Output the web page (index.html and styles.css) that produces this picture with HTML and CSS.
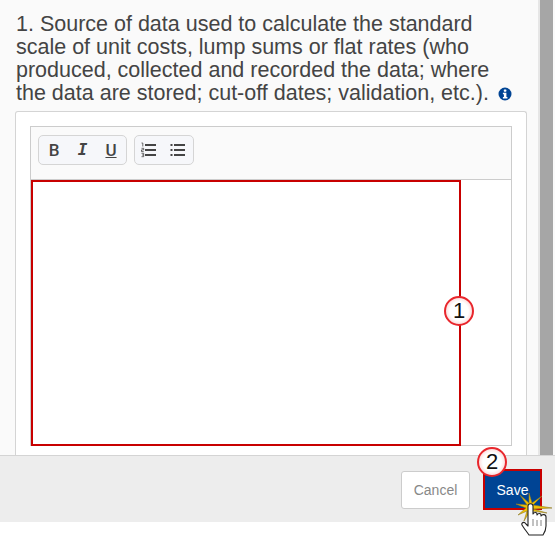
FILE: index.html
```html
<!DOCTYPE html>
<html lang="en">
<head>
    <meta charset="UTF-8">
    <title>Edit section</title>
    <link rel="stylesheet" href="styles.css">
</head>
<body>

<div class="main">
    <div class="content">
        <p class="question">1. Source of data used to calculate the standard scale of unit costs, lump sums or flat rates (who produced, collected and recorded the data; where the data are stored; cut-off dates; validation, etc.).
            <svg class="info" width="14" height="14" viewBox="0 0 14 14">
                <circle cx="7" cy="7" r="6.5" fill="#004494"/>
                <rect x="5.8" y="2.4" width="2.6" height="2.3" rx="0.6" fill="#fff"/>
                <path d="M4.9 5.8h3.5v4.3h1v1.5H4.9v-1.5h1V7.3h-1z" fill="#fff"/>
            </svg>
        </p>
        <div class="panel">
            <div class="editor">
                <div class="toolbar">
                    <div class="btn-group">
                        <span class="tool tool-b">B</span>
                        <span class="tool tool-i">I</span>
                        <span class="tool tool-u">U</span>
                    </div>
                    <div class="btn-group btn-group-lists">
                        <svg width="16" height="16" viewBox="0 0 16 16">
                            <path d="M4 3h11M4 8h11M4 13h11" stroke="#444" stroke-width="2"/>
                            <path d="M0.500 1h1.300v3.500M0.500 6.300h2.200v1.600h-2.200v1.700h2.200M0.500 11.300h2.200v3.400h-2.200M1 13h1.700" stroke="#444" stroke-width="0.800" fill="none"/>
                        </svg>
                        <svg width="16" height="16" viewBox="0 0 16 16">
                            <path d="M4 3h11M4 8h11M4 13h11" stroke="#444" stroke-width="2"/>
                            <path d="M0.500 3h2M0.500 8h2M0.500 13h2" stroke="#444" stroke-width="2"/>
                        </svg>
                    </div>
                </div>
                <div class="edit-row">
                    <div class="edit-area"></div>
                </div>
            </div>
        </div>
    </div>
    <div class="scrollbar"></div>
</div>

<div class="footer">
    <button class="btn btn-cancel">Cancel</button>
    <button class="btn btn-save">Save</button>
</div>

<!-- annotations over the screenshot -->
<span class="marker marker-1">1</span>
<span class="marker marker-2">2</span>
<svg class="cursor" width="40" height="45" viewBox="0 0 40 45">
    <path d="M27 3L18 12L37 15L18 16L32 20L17 18L20 27L15 18L9 28L12 18L3 22L11 15L1 11L12 12L5 2L14 10L14 0L17 10Z" fill="#f2c200" stroke="#8f7a2a" stroke-width="0.600"/>
    <path d="M14 42c-2-3-6-8-7-10-1-2 2-4 4-1l2 2V13c0-3 5-3 5 0v8c1-2 4-2 4 0v1c1-2 4-2 4 0v1c1-2 5-2 5 1v9c0 4-1 6-3 9z" fill="#fff" stroke="#222" stroke-width="1.100" stroke-linejoin="round"/>
    <path d="M18 26v7M22 27v6M26 27v6" stroke="#666" stroke-width="0.800"/>
</svg>

</body>
</html>
```

FILE: styles.css
```css
/* Global Styles */
html, body {
    height: 100%;
}

body {
    font-family: 'Liberation Sans', Arial, sans-serif;
    background: #fff;
    color: #404040;
    margin: 0;
    position: relative;
    overflow: hidden;
}

.main {
    display: flex;
    height: 456px;
    background: #fafafa;
    border-bottom: 1px solid #d4d4d4;
    box-sizing: border-box;
}

.content {
    flex: 1;
    padding: 13px 0 0 15px;
    min-width: 0;
    border-right: 2px solid #e6e6e6;
    display: flex;
    flex-direction: column;
}

.scrollbar {
    width: 13px;
    background: #a6a6a6;
    margin-right: 2px;
}

.question {
    width: 490px;
    margin: 0 0 6px 1px;
    font-size: 21.5px;
    line-height: 23px;
    color: #444;
}

.info {
    vertical-align: -1px;
    margin-left: 3px;
    margin-right: -30px;
}

/* Panel and editor */
.panel {
    flex: 1;
    width: 512px;
    box-sizing: border-box;
    background: #fff;
    border: 1px solid #d4d4d4;
    border-bottom: 0;
    border-radius: 3px 3px 0 0;
    padding: 14px 0 9px 14px;
}

.editor {
    width: 482px;
    height: 320px;
    box-sizing: border-box;
    border: 1px solid #ccc;
    display: flex;
    flex-direction: column;
}

.toolbar {
    height: 53px;
    box-sizing: border-box;
    background: #fafafa;
    border-bottom: 1px solid #ccc;
    padding: 8px 7px;
    display: flex;
    gap: 7px;
    align-items: flex-start;
}

.btn-group {
    height: 30px;
    box-sizing: border-box;
    background: #f6f7fa;
    border: 1px solid #d5d5d5;
    border-radius: 5px;
    display: flex;
    align-items: center;
    padding: 0 6px;
    gap: 10.5px;
}

.btn-group-lists {
    gap: 13px;
    padding-right: 7px;
}

.tool {
    width: 18px;
    text-align: center;
    font-family: Roboto, sans-serif;
    font-weight: 500;
    font-size: 17px;
    color: #444;
    line-height: 18px;
}

.tool-i {
    font-style: italic;
    font-family: 'DejaVu Sans Mono', monospace;
    font-size: 16px;
    font-weight: bold;
}

.tool-u {
    text-decoration: underline;
}

.edit-row {
    flex: 1;
    display: flex;
    min-height: 0;
}

.edit-area {
    width: 430px;
    box-sizing: border-box;
    border: 2px solid #c80000;
    background: #fff;
    margin-bottom: -1px;
}

/* Footer */
.footer {
    height: 66px;
    background: #ededed;
    display: flex;
    justify-content: flex-end;
    align-items: flex-start;
    gap: 13px;
    padding: 15px 13px 0 0;
    box-sizing: border-box;
}

.btn {
    font-family: 'Liberation Sans', Arial, sans-serif;
    font-size: 14px;
    height: 38px;
    border-radius: 3px;
    padding: 0;
}

.btn-cancel {
    width: 69px;
    background: #fff;
    color: #888;
    border: 1px solid #ccc;
}

.btn-save {
    width: 59px;
    height: 41px;
    margin-top: -2px;
    background: #004494;
    color: #fff;
    border: 2px solid #c80000;
    border-radius: 0;
}

/* Annotations */
.marker {
    position: absolute;
    width: 30px;
    height: 30px;
    box-sizing: border-box;
    border: 2px solid #e8262c;
    border-radius: 50%;
    background: radial-gradient(circle, #fff 50%, #f9b4b4 100%);
    font-size: 22px;
    line-height: 26px;
    text-align: center;
    color: #111;
}

.marker-1 {
    left: 444px;
    top: 296px;
}

.marker-2 {
    left: 477px;
    top: 447px;
}

.cursor {
    position: absolute;
    left: 515px;
    top: 493px;
}
```
